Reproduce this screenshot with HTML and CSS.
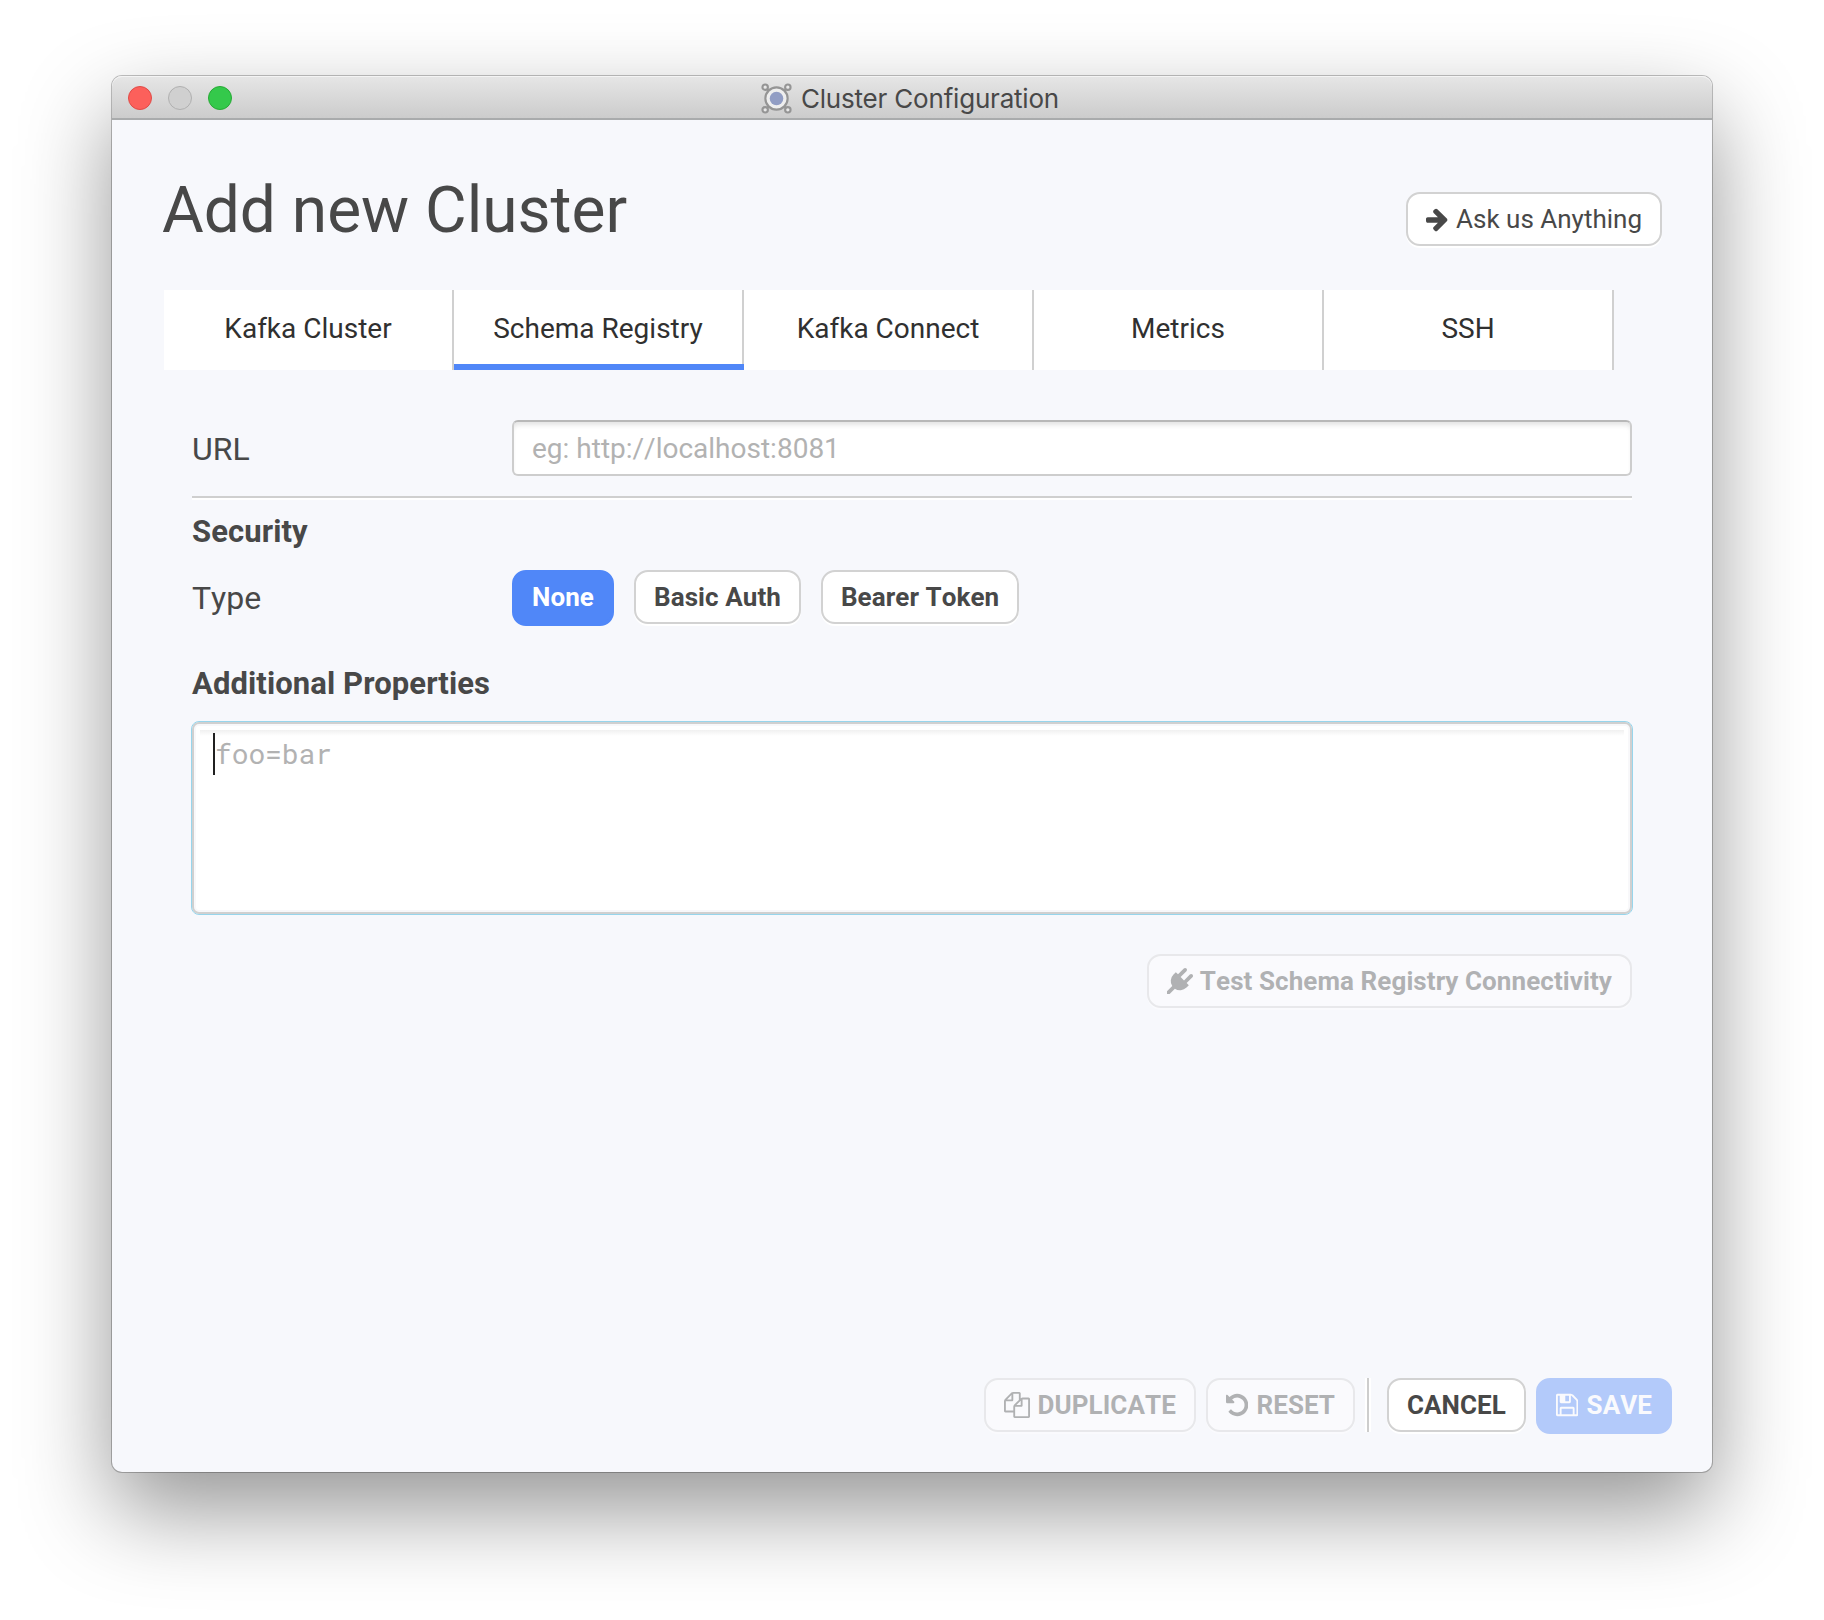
FILE: index.html
```html
<!DOCTYPE html>
<html lang="en">
<head>
<meta charset="utf-8">
<title>Cluster Configuration</title>
<link rel="stylesheet" href="styles.css">
</head>
<body>
<div class="window">
  <header class="titlebar">
    <div class="lights"><span class="light close"></span><span class="light minimize"></span><span class="light zoom"></span></div>
    <div class="caption">
      <svg class="app-icon" viewBox="0 0 32 32" fill="none" stroke="#959595" stroke-width="2.2">
        <path d="M5 5L9 9M27 5L23 9M5 27L9 23M27 27L23 23"/>
        <circle cx="16" cy="16" r="11.5" fill="#eeeeee"/>
        <g fill="#e8e8e8"><circle cx="4.3" cy="4.3" r="2.8"/><circle cx="27.7" cy="4.3" r="2.8"/><circle cx="4.3" cy="27.7" r="2.8"/><circle cx="27.7" cy="27.7" r="2.8"/></g>
        <circle cx="16" cy="16" r="7" fill="#919dc4" stroke="none"/>
      </svg>
      <span class="caption-text">Cluster Configuration</span>
    </div>
  </header>
  <main class="content">
    <div class="heading">
      <h1>Add new Cluster</h1>
      <button class="btn ask"><svg class="icon narrow" viewBox="128 0 1536 1792"><path d="M1600 960q0 54-37 91l-651 651q-39 37-91 37-51 0-90-37l-75-75q-38-38-38-91t38-91l293-293h-704q-52 0-84.500-37.500t-32.500-90.500v-128q0-53 32.500-90.500t84.500-37.500h704l-293-294q-38-36-38-90t38-90l75-75q38-38 90-38 53 0 91 38l651 651q37 35 37 90z"/></svg> Ask us Anything</button>
    </div>
    <nav class="tabs">
      <a class="tab">Kafka Cluster</a>
      <a class="tab active">Schema Registry</a>
      <a class="tab">Kafka Connect</a>
      <a class="tab">Metrics</a>
      <a class="tab">SSH</a>
    </nav>
    <section class="form">
      <div class="row url-row"><label>URL</label><div class="input">eg: http://localhost:8081</div></div>
      <hr>
      <h2>Security</h2>
      <div class="row type-row"><label>Type</label>
        <div class="choices"><button class="btn primary">None</button><button class="btn">Basic Auth</button><button class="btn">Bearer Token</button></div>
      </div>
      <h2 class="props-title">Additional Properties</h2>
      <div class="textarea"><div class="textarea-inner"><span class="caret"></span>foo=bar</div></div>
      <div class="test-row"><button class="btn disabled"><svg class="icon" viewBox="0 0 1792 1792"><path d="M1755 453q37 38 37 90.500t-37 90.500l-401 400 150 150-160 160q-163 163-389.500 186.500t-411.500-100.500l-362 362h-181v-181l362-362q-124-185-100.500-411.500t186.500-389.500l160-160 150 150 400-401q38-37 91-37t90 37 37 90.500-37 90.500l-400 401 234 234 401-400q38-37 91-37t90 37z"/></svg> Test Schema Registry Connectivity</button></div>
    </section>
    <footer class="actions">
      <button class="btn disabled"><svg class="icon" viewBox="0 0 1792 1792"><path d="M1696 384q40 0 68 28t28 68v1216q0 40-28 68t-68 28h-960q-40 0-68-28t-28-68v-288h-544q-40 0-68-28t-28-68v-672q0-40 20-88t48-76l408-408q28-28 76-48t88-20h416q40 0 68 28t28 68v328q68-40 128-40h416zm-544 213l-299 299h299v-299zm-640-384l-299 299h299v-299zm196 647l316-316v-416h-384v416q0 40-28 68t-68 28h-416v640h512v-256q0-40 20-88t48-76zm956 804v-1152h-384v416q0 40-28 68t-68 28h-416v640h896z"/></svg> DUPLICATE</button>
      <button class="btn disabled"><svg class="icon narrow" viewBox="128 0 1536 1792"><path d="M1664 896q0 156-61 298t-164 245-245 164-298 61q-172 0-327-72.500t-264-204.500q-7-10-6.500-22.500t8.500-20.500l137-138q10-9 25-9 16 2 23 12 73 95 179 147t225 52q104 0 198.500-40.500t163.500-109.500 109.500-163.500 40.500-198.500-40.500-198.500-109.500-163.500-163.500-109.500-198.500-40.500q-98 0-188 35.500t-160 101.500l137 138q31 30 14 69-17 40-59 40h-448q-26 0-45-19t-19-45v-448q0-42 40-59 39-17 69 14l130 129q107-101 244.500-156.500t284.500-55.500q156 0 298 61t245 164 164 245 61 298z"/></svg> RESET</button>
      <span class="divider"></span>
      <button class="btn">CANCEL</button>
      <button class="btn primary disabled"><svg class="icon narrow" viewBox="128 0 1536 1792"><path d="M512 1536h768v-384h-768v384zm896 0h128v-896q0-14-10-38.500t-20-34.500l-281-281q-10-10-34-20t-39-10v416q0 40-28 68t-68 28h-576q-40 0-68-28t-28-68v-416h-128v1280h128v-416q0-40 28-68t68-28h832q40 0 68 28t28 68v416zm-384-928v-320q0-13-9.500-22.500t-22.500-9.500h-192q-13 0-22.500 9.500t-9.500 22.500v320q0 13 9.500 22.500t22.500 9.500h192q13 0 22.500-9.500t9.500-22.500zm640 32v928q0 40-28 68t-68 28h-1344q-40 0-68-28t-28-68v-1344q0-40 28-68t68-28h928q40 0 88 20t76 48l280 280q28 28 48 76t20 88z"/></svg> SAVE</button>
    </footer>
  </main>
</div>
</body>
</html>
```
FILE: styles.css
```css
* { box-sizing: border-box; }
body {
  margin: 0;
  height: 1620px;
  overflow: hidden;
  padding: 76px 112px 0;
  background: #fff;
  font-family: Roboto, "Liberation Sans", sans-serif;
  color: #484848;
}
.window {
  width: 1600px;
  height: 1396px;
  border-radius: 10px;
  background: #f7f8fc;
  box-shadow: 0 0 0 1px rgba(0, 0, 0, .24), 0 38px 90px rgba(0, 0, 0, .42);
  display: flex;
  flex-direction: column;
}
.titlebar {
  height: 44px;
  flex: none;
  display: flex;
  align-items: center;
  border-radius: 10px 10px 0 0;
  background: linear-gradient(#e6e6e6, #cccccc);
  box-shadow: inset 0 1px #f4f4f4;
  border-bottom: 2px solid #a9abac;
  padding: 2px 16px 0;
}
.lights { display: flex; gap: 16px; width: 400px; }
.light { width: 24px; height: 24px; border-radius: 50%; border: 1px solid #b0b0b0; background: #d0d0d0; }
.close { background: #fc605b; border-color: #e04b47; }
.zoom { background: #34c94b; border-color: #27aa35; }
.caption { flex: 1; display: flex; align-items: center; justify-content: center; gap: 9px; margin-right: 404px; }
.app-icon { width: 31px; height: 31px; }
.caption-text { font: 26px/38px Inter, sans-serif; letter-spacing: -.2px; padding-top: 2px; white-space: nowrap; }
.content { flex: 1; display: flex; flex-direction: column; padding: 0 52px; }
.heading { display: flex; justify-content: space-between; height: 170px; }
h1 { margin: 53px 0 0 -2px; font-size: 64px; line-height: 76px; font-weight: 400; }
.btn {
  height: 54px;
  border: 2px solid #d2d2d2;
  border-radius: 14px;
  background: #fff;
  box-shadow: 0 2px #fff;
  padding: 0 18px;
  font: bold 26px/50px Roboto, sans-serif;
  font-kerning: none;
  letter-spacing: .08px;
  color: #484848;
  white-space: nowrap;
}
.ask { margin-top: 72px; margin-right: -2px; font-weight: 400; letter-spacing: 0; }
.icon { width: 26px; height: 26px; margin-right: .8px; vertical-align: -3.7px; fill: currentColor; }
.narrow { width: 22.3px; margin-right: 1.8px; }
.primary { height: 56px; border-color: #5087f8; border-bottom-width: 4px; background: #5087f8; color: #fff; box-shadow: none; }
.disabled { opacity: .4; }
.tabs { display: flex; }
.tab {
  width: 290px;
  height: 80px;
  border-right: 2px solid #d0d0d0;
  background: #fff;
  text-align: center;
  font-size: 28px;
  line-height: 78px;
  color: #303030;
}
.active { border-image: linear-gradient(#d0d0d0 74px, #5087f8 74px) 0 2 0 0; box-shadow: inset 0 -6px #5087f8; }
.form { padding: 50px 28px 0; }
.row { display: flex; }
label { width: 320px; font-size: 32px; font-kerning: none; }
.url-row { height: 76px; }
.url-row label { line-height: 58px; }
.input {
  flex: 1;
  height: 56px;
  border: 2px solid #cdcdcd;
  border-top-color: #b8b8b8;
  border-radius: 6px;
  background: #fff;
  box-shadow: inset 0 5px 5px -2px rgba(0, 0, 0, .11);
  padding: 0 18px;
  font-size: 28px;
  line-height: 54px;
  font-kerning: none;
  color: #b2b2b2;
}
hr { margin: 0; border: 0; height: 4px; background: linear-gradient(#cfcfcf 50%, #fff 50%); }
h2 { margin: 14px 0 0; font-size: 31px; line-height: 36px; font-weight: bold; letter-spacing: .1px; }
.type-row { margin-top: 20px; height: 56px; }
.type-row label { line-height: 56px; }
.choices { display: flex; gap: 20px; }
.props-title { margin-top: 40px; }
.textarea {
  margin: 19px -1px 0;
  height: 194px;
  border: 1px solid #97d5ec;
  border-radius: 8px;
  background: #fff;
  box-shadow: inset 0 0 0 2px #d0d0d0, inset 0 0 0 4px #f8f8fa;
  padding: 8px;
}
.textarea-inner {
  display: flex;
  height: 46px;
  padding: 3px 0 0 13px;
  background: linear-gradient(#f0f0f0, #fff 6px);
  font: 28px/41px "Roboto Mono", "DejaVu Sans Mono", monospace;
  letter-spacing: -.1px;
  color: #b2b2b2;
}
.caret { width: 2px; height: 42px; background: #202020; }
.test-row { display: flex; justify-content: flex-end; margin-top: 39px; }
.actions { margin-top: auto; display: flex; justify-content: flex-end; gap: 10px; height: 94px; margin-right: -12px; }
.divider { width: 6px; height: 54px; border: solid #fff; border-width: 0 2px; background: #cdcdcd; margin-right: 6px; }
```
